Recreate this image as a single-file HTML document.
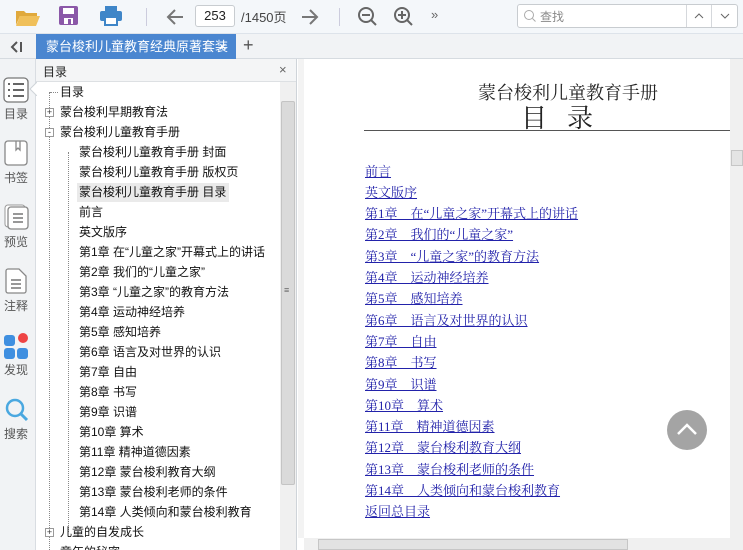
<!DOCTYPE html>
<html><head><meta charset="utf-8"><style>
*{margin:0;padding:0;box-sizing:border-box}
body{width:743px;height:550px;overflow:hidden;background:#fff;font-family:"Liberation Sans","Noto Sans CJK SC",sans-serif;font-size:12px;color:#222;position:relative}
.a{position:absolute}
#tb{left:0;top:0;width:743px;height:34px;background:#f4f7fa;border-bottom:1px solid #dde3ea}
#tabs{left:0;top:34px;width:743px;height:25px;background:#f1f3f5;border-bottom:1px solid #d6dbe0}
#side{left:0;top:59px;width:36px;height:491px;background:#f1f3f5;border-right:1px solid #d9dde2}
#panel{left:36px;top:59px;width:261px;height:491px;background:#fff;border-right:1px solid #cfd4d9}
#ph{left:0;top:0;width:260px;height:23px;background:#f4f5f6;border-bottom:1px solid #dde0e3}
.row{position:absolute;height:20px;line-height:20px;font-size:12px;white-space:nowrap;color:#111}
.lk{position:absolute;left:365px;font-family:"Liberation Serif","Noto Serif CJK SC",serif;font-size:13px;color:#2222aa;text-decoration:underline;white-space:nowrap}
.si{position:absolute;left:0;width:32px;text-align:center;font-size:12px;color:#555}
.dot{position:absolute;border-top:1px dotted #888;width:8px}
</style></head><body>
<div id="tb" class="a">
 <svg class="a" style="left:15px;top:7px" width="26" height="20"><path d="M1 4h8l2 2h11v3H5L1 18z" fill="#e0a93c"/><path d="M5 9h20l-4 10H1z" fill="#f0c05a"/></svg>
 <svg class="a" style="left:59px;top:6px" width="20" height="20"><rect x="0" y="0" width="19" height="19" rx="2" fill="#8b58a8"/><rect x="4" y="2" width="11" height="6" fill="#fff"/><rect x="5" y="12" width="9" height="6" fill="#fff"/><rect x="9" y="13" width="3" height="5" fill="#8b58a8"/></svg>
 <svg class="a" style="left:100px;top:6px" width="22" height="20"><rect x="5" y="0" width="12" height="5" fill="#3f86c8"/><rect x="0" y="5" width="22" height="10" rx="2" fill="#3f86c8"/><rect x="5" y="11" width="12" height="8" fill="#fff" stroke="#3f86c8" stroke-width="2"/></svg>
 <div class="a" style="left:146px;top:8px;width:1px;height:18px;background:#ccd"></div>
 <svg class="a" style="left:165px;top:7px" width="20" height="20"><path d="M18 10H3M10 3L3 10l7 7" stroke="#777" stroke-width="2" fill="none"/></svg>
 <div class="a" style="left:195px;top:5px;width:40px;height:22px;border:1px solid #c8ccd0;border-radius:3px;background:#fff;text-align:center;line-height:20px;font-size:13px">253</div>
 <div class="a" style="left:241px;top:7px;font-size:13px;color:#444">/1450页</div>
 <svg class="a" style="left:300px;top:7px" width="20" height="20"><path d="M2 10h15M10 3l7 7-7 7" stroke="#777" stroke-width="2" fill="none"/></svg>
 <div class="a" style="left:339px;top:8px;width:1px;height:18px;background:#ccd"></div>
 <svg class="a" style="left:357px;top:6px" width="22" height="22"><circle cx="9" cy="9" r="7" stroke="#666" stroke-width="2" fill="none"/><path d="M5 9h8M14 14l5 5" stroke="#666" stroke-width="2"/></svg>
 <svg class="a" style="left:393px;top:6px" width="22" height="22"><circle cx="9" cy="9" r="7" stroke="#666" stroke-width="2" fill="none"/><path d="M5 9h8M9 5v8M14 14l5 5" stroke="#666" stroke-width="2"/></svg>
 <div class="a" style="left:431px;top:7px;font-size:13px;color:#666">»</div>
 <div class="a" style="left:517px;top:4px;width:221px;height:24px;border:1px solid #c8ccd0;border-radius:3px;background:#fff"></div>
 <svg class="a" style="left:523px;top:9px" width="14" height="14"><circle cx="6" cy="6" r="4.5" stroke="#aaa" fill="none"/><path d="M9.5 9.5l3 3" stroke="#aaa"/></svg>
 <div class="a" style="left:540px;top:8px;color:#888;font-size:12px">查找</div>
 <div class="a" style="left:686px;top:5px;width:1px;height:22px;background:#d5d8dc"></div>
 <div class="a" style="left:711px;top:5px;width:1px;height:22px;background:#d5d8dc"></div>
 <svg class="a" style="left:693px;top:12px" width="12" height="8"><path d="M2 6l4-4 4 4" stroke="#666" fill="none"/></svg>
 <svg class="a" style="left:719px;top:12px" width="12" height="8"><path d="M2 2l4 4 4-4" stroke="#666" fill="none"/></svg>
</div>
<div id="tabs" class="a">
 <svg class="a" style="left:9px;top:6px" width="14" height="14"><path d="M8 2L3 7l5 5" stroke="#555" stroke-width="2" fill="none"/><path d="M12 2v10" stroke="#555" stroke-width="2"/></svg>
 <div class="a" style="left:36px;top:0;width:200px;height:25px;background:#4a86d0;color:#fff;font-size:13px;line-height:25px;padding-left:10px;white-space:nowrap;overflow:hidden">蒙台梭利儿童教育经典原著套装 <span style="position:absolute;left:183px">×</span></div>
 <div class="a" style="left:243px;top:1px;font-size:18px;color:#555">+</div>
</div>
<div id="side" class="a">
 <svg class="a" style="left:3px;top:18px" width="26" height="26"><rect x="1" y="1" width="24" height="24" rx="4" stroke="#777" fill="#fff" stroke-width="1.3"/><path d="M5 7h2M10 7h11M5 13h2M10 13h11M5 19h2M10 19h11" stroke="#666" stroke-width="2"/></svg>
 <div class="si" style="top:46px">目录</div>
 <svg class="a" style="left:4px;top:81px" width="24" height="26"><rect x="1" y="1" width="22" height="24" rx="3" stroke="#888" fill="#fff" stroke-width="1.3"/><path d="M12 1v9l2-2 2 2V1" stroke="#888" fill="none" stroke-width="1.3"/></svg>
 <div class="si" style="top:110px">书签</div>
 <svg class="a" style="left:4px;top:145px" width="26" height="26"><rect x="1" y="1" width="20" height="22" rx="3" stroke="#999" fill="#fff"/><rect x="4" y="3" width="20" height="22" rx="3" stroke="#888" fill="#fff" stroke-width="1.3"/><path d="M9 10h10M9 14h10M9 18h10" stroke="#777" stroke-width="1.5"/></svg>
 <div class="si" style="top:174px">预览</div>
 <svg class="a" style="left:5px;top:209px" width="22" height="26"><path d="M1 3a2 2 0 012-2h11l7 7v15a2 2 0 01-2 2H3a2 2 0 01-2-2z" stroke="#888" fill="#fff" stroke-width="1.3"/><path d="M6 12h10M6 16h10M6 20h10" stroke="#777" stroke-width="1.5"/></svg>
 <div class="si" style="top:238px">注释</div>
 <div class="a" style="left:4px;top:276px;width:11px;height:11px;border-radius:3px;background:#3f8fe0"></div>
 <div class="a" style="left:18px;top:274px;width:10px;height:10px;border-radius:50%;background:#ee4444"></div>
 <div class="a" style="left:4px;top:289px;width:11px;height:11px;border-radius:3px;background:#3f8fe0"></div>
 <div class="a" style="left:17px;top:289px;width:11px;height:11px;border-radius:3px;background:#3f8fe0"></div>
 <div class="si" style="top:302px">发现</div>
 <svg class="a" style="left:4px;top:338px" width="26" height="26"><circle cx="11" cy="11" r="8" stroke="#4aa8e0" stroke-width="2.5" fill="none"/><path d="M17 17l6 6" stroke="#4aa8e0" stroke-width="3"/></svg>
 <div class="si" style="top:366px">搜索</div>
</div>
<svg class="a" style="left:29px;top:82px;z-index:3" width="8" height="14"><path d="M8 0L1 7l7 7" fill="#fff" stroke="#cfd4d9"/></svg>
<div id="panel" class="a">
 <div id="ph" class="a"><span class="a" style="left:7px;top:4px;font-size:12px">目录</span><span class="a" style="left:243px;top:3px;font-size:13px;color:#666">×</span></div>
 <div class="a" style="left:0;top:23px;width:244px;height:468px;overflow:hidden">
  <div class="a" style="left:13px;top:10px;height:470px;border-left:1px dotted #888"></div>
  <div class="a" style="left:32px;top:70px;height:380px;border-left:1px dotted #888"></div>
  <div class="dot" style="left:14px;top:10px"></div>
  <div class="row" style="left:24px;top:0">目录</div>
  <div class="a" style="left:9px;top:26px;width:9px;height:9px;border:1px solid #999;background:#fff;font-size:9px;line-height:7px;text-align:center;color:#333">+</div>
  <div class="row" style="left:24px;top:20px">蒙台梭利早期教育法</div>
  <div class="a" style="left:9px;top:46px;width:9px;height:9px;border:1px solid #999;background:#fff;font-size:9px;line-height:6px;text-align:center;color:#333">-</div>
  <div class="row" style="left:24px;top:40px">蒙台梭利儿童教育手册</div>
  <div class="a" style="left:41px;top:101px;width:152px;height:19px;background:#eaeaea"></div>
  <div class="row" style="left:43px;top:60px">蒙台梭利儿童教育手册 封面</div>
  <div class="row" style="left:43px;top:80px">蒙台梭利儿童教育手册 版权页</div>
  <div class="row" style="left:43px;top:100px">蒙台梭利儿童教育手册 目录</div>
  <div class="row" style="left:43px;top:120px">前言</div>
  <div class="row" style="left:43px;top:140px">英文版序</div>
  <div class="row" style="left:43px;top:160px">第1章 在“儿童之家”开幕式上的讲话</div>
  <div class="row" style="left:43px;top:180px">第2章 我们的“儿童之家”</div>
  <div class="row" style="left:43px;top:200px">第3章 “儿童之家”的教育方法</div>
  <div class="row" style="left:43px;top:220px">第4章 运动神经培养</div>
  <div class="row" style="left:43px;top:240px">第5章 感知培养</div>
  <div class="row" style="left:43px;top:260px">第6章 语言及对世界的认识</div>
  <div class="row" style="left:43px;top:280px">第7章 自由</div>
  <div class="row" style="left:43px;top:300px">第8章 书写</div>
  <div class="row" style="left:43px;top:320px">第9章 识谱</div>
  <div class="row" style="left:43px;top:340px">第10章 算术</div>
  <div class="row" style="left:43px;top:360px">第11章 精神道德因素</div>
  <div class="row" style="left:43px;top:380px">第12章 蒙台梭利教育大纲</div>
  <div class="row" style="left:43px;top:400px">第13章 蒙台梭利老师的条件</div>
  <div class="row" style="left:43px;top:420px">第14章 人类倾向和蒙台梭利教育</div>
  <div class="a" style="left:9px;top:446px;width:9px;height:9px;border:1px solid #999;background:#fff;font-size:9px;line-height:7px;text-align:center;color:#333">+</div>
  <div class="row" style="left:24px;top:440px">儿童的自发成长</div>
  <div class="row" style="left:24px;top:460px">童年的秘密</div>
 </div>
 <div class="a" style="left:244px;top:23px;width:16px;height:468px;background:#f0f0f0"></div>
 <div class="a" style="left:245px;top:42px;width:14px;height:384px;background:#dadada;border:1px solid #c4c4c4;border-radius:2px"></div>
 <div class="a" style="left:248px;top:226px;font-size:9px;color:#666">≡</div>
</div>
<div class="a" style="left:298px;top:59px;width:6px;height:479px;background:#f3f3f3"></div>
<div class="a" style="left:730px;top:59px;width:13px;height:491px;background:#f0f0f0"></div>
<div class="a" style="left:731px;top:150px;width:12px;height:16px;background:#e4e4e4;border:1px solid #c6c6c6"></div>
<div class="a" style="left:304px;top:538px;width:426px;height:12px;background:#f0f0f0"></div>
<div class="a" style="left:318px;top:539px;width:310px;height:11px;background:#e2e2e2;border:1px solid #c6c6c6"></div>
<div class="a" style="left:478px;top:79px;font-family:'Liberation Serif','Noto Serif CJK SC',serif;font-size:18px;color:#222">蒙台梭利儿童教育手册</div>
<div class="a" style="left:521px;top:98px;font-family:'Liberation Serif','Noto Serif CJK SC',serif;font-size:26px;color:#222;letter-spacing:20px">目录</div>
<div class="a" style="left:364px;top:130px;width:366px;height:1px;background:#555"></div>
<div class="lk" style="top:161px">前言</div>
<div class="lk" style="top:182px">英文版序</div>
<div class="lk" style="top:203px">第1章　在“儿童之家”开幕式上的讲话</div>
<div class="lk" style="top:224px">第2章　我们的“儿童之家”</div>
<div class="lk" style="top:246px">第3章　“儿童之家”的教育方法</div>
<div class="lk" style="top:267px">第4章　运动神经培养</div>
<div class="lk" style="top:288px">第5章　感知培养</div>
<div class="lk" style="top:310px">第6章　语言及对世界的认识</div>
<div class="lk" style="top:331px">第7章　自由</div>
<div class="lk" style="top:352px">第8章　书写</div>
<div class="lk" style="top:374px">第9章　识谱</div>
<div class="lk" style="top:395px">第10章　算术</div>
<div class="lk" style="top:416px">第11章　精神道德因素</div>
<div class="lk" style="top:437px">第12章　蒙台梭利教育大纲</div>
<div class="lk" style="top:459px">第13章　蒙台梭利老师的条件</div>
<div class="lk" style="top:480px">第14章　人类倾向和蒙台梭利教育</div>
<div class="lk" style="top:501px">返回总目录</div>
<div class="a" style="left:667px;top:410px;width:40px;height:40px;border-radius:50%;background:#a4a4a4"></div>
<svg class="a" style="left:675px;top:420px" width="24" height="18"><path d="M3 14l9-9 9 9" stroke="#fff" stroke-width="2.5" fill="none"/></svg>
</body></html>
